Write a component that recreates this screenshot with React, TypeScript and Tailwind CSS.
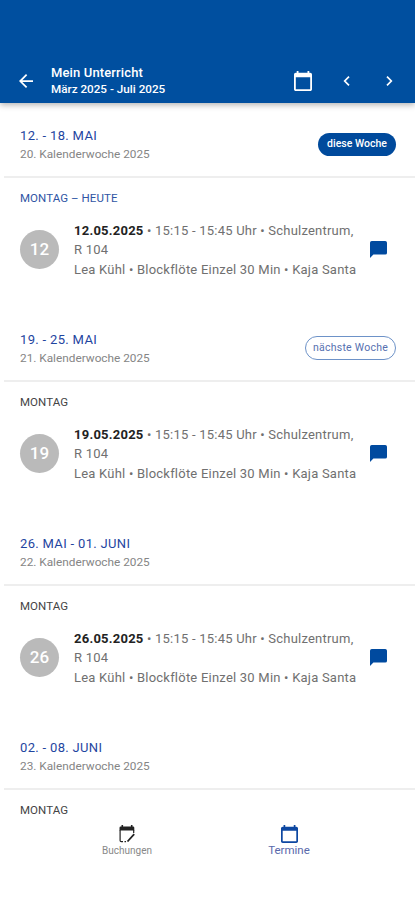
type Lesson = { day: string; date: string };

type Week = {
  title: string;
  week: number;
  label: string;
  today?: boolean;
  badge?: 'current' | 'next';
  lesson?: Lesson;
};

const weeks: Week[] = [
  { title: '12. - 18. MAI', week: 20, label: 'MONTAG – HEUTE', today: true, badge: 'current', lesson: { day: '12', date: '12.05.2025' } },
  { title: '19. - 25. MAI', week: 21, label: 'MONTAG', badge: 'next', lesson: { day: '19', date: '19.05.2025' } },
  { title: '26. MAI - 01. JUNI', week: 22, label: 'MONTAG', lesson: { day: '26', date: '26.05.2025' } },
  { title: '02. - 08. JUNI', week: 23, label: 'MONTAG' },
];

const CalendarIcon = ({ className }: { className: string }) => (
  <svg viewBox="2 1 20 22" fill="currentColor" preserveAspectRatio="none" className={className}>
    <path d="M20 3h-1V1h-2v2H7V1H5v2H4c-1.1 0-2 .9-2 2v16c0 1.1.9 2 2 2h16c1.1 0 2-.9 2-2V5c0-1.1-.9-2-2-2zm0 18H4V8h16v13z" />
  </svg>
);

const BookingIcon = () => (
  <svg viewBox="0 0 16 18" className="h-[18px] w-4 text-[#222]">
    <path d="M2.500 0h1.600v1.400h7.800V0h1.600v1.400h.5q1.300 0 1.300 1.300v2.800H.5V2.700q0-1.300 1.300-1.300h.7z" fill="currentColor" />
    <path d="M1.100 5v10.400q0 1.200 1.200 1.200H4M5.500 16.600H7M14.700 5v3" stroke="currentColor" strokeWidth="1.200" fill="none" />
    <path d="M8.500 16.500 15.200 9.200" stroke="currentColor" strokeWidth="1.800" fill="none" />
  </svg>
);

const Header = () => (
  <header className="relative z-10 flex h-[103px] shrink-0 items-end bg-[#004f9f] text-white shadow-[0_2px_6px_rgba(0,0,0,0.3)]">
    <div className="flex h-[45px] w-full items-center">
      <svg viewBox="4 4 16 16" fill="currentColor" className="ml-[19px] h-[14px] w-[14px]">
        <path d="M20 11H7.830l5.590-5.590L12 4l-8 8 8 8 1.410-1.410L7.830 13H20v-2z" />
      </svg>
      <div className="ml-[18px] flex-1 pt-px font-medium">
        <h1 className="text-[13px] leading-[17px] tracking-[0.01em]">Mein Unterricht</h1>
        <p className="text-[11.700px] leading-[17px]">März 2025 - Juli 2025</p>
      </div>
      <CalendarIcon className="h-5 w-[18px]" />
      <svg viewBox="0 0 7 10" className="ml-[31px] h-[10px] w-[7px]" fill="none" stroke="currentColor" strokeWidth="1.700">
        <path d="M6 .7 1.700 5 6 9.300" />
      </svg>
      <svg viewBox="0 0 7 10" className="mr-[22px] ml-9 h-[10px] w-[7px]" fill="none" stroke="currentColor" strokeWidth="1.700">
        <path d="M1 .7 5.300 5 1 9.300" />
      </svg>
    </div>
  </header>
);

const WeekBadge = ({ kind }: { kind: 'current' | 'next' }) =>
  kind === 'current' ? (
    <span className="flex h-[23px] w-[78px] items-center justify-center rounded-full bg-[#004a9c] text-[10.500px] font-medium whitespace-nowrap text-white">diese Woche</span>
  ) : (
    <span className="flex h-6 w-[91px] items-center justify-center rounded-full border border-[#6d92c8] text-[10.500px] tracking-[0.025em] whitespace-nowrap text-[#5670b0]">nächste Woche</span>
  );

const LessonRow = ({ day, date }: Lesson) => (
  <div className="flex items-center pt-[14px] pr-[28px] pl-5">
    <div className="flex h-[39px] w-[39px] shrink-0 items-center justify-center rounded-full bg-[#bababa] text-[17px] font-medium text-white">{day}</div>
    <div className="ml-[15px] flex-1 text-[13px] leading-[19.300px] tracking-[0.017em] whitespace-nowrap text-[#707070]">
      <p>
        <b className="font-bold tracking-[0.018em] text-[#222]">{date}</b> • 15:15 - 15:45 Uhr • Schulzentrum,
      </p>
      <p>R 104</p>
      <p>Lea Kühl • Blockflöte Einzel 30 Min • Kaja Santa</p>
    </div>
    <svg viewBox="0 0 17 17" className="h-[17px] w-[17px] shrink-0 text-[#004a9f]" fill="currentColor">
      <path d="M1.800 0h13.400Q17 0 17 1.700v10.200q0 1.700-1.800 1.700H3.400L0 17V1.700Q0 0 1.800 0z" />
    </svg>
  </div>
);

const WeekSection = ({ week }: { week: Week }) => (
  <section className="h-[204px] shrink-0">
    <div className="ml-1 flex h-[75px] items-center justify-between border-b-2 border-[#eeeeee] pr-[19px] pl-4">
      <div className="pt-[11px]">
        <h2 className="text-[13px] leading-[19px] tracking-[0.025em] text-[#1f459f]">{week.title}</h2>
        <p className="text-[11.800px] leading-[19px] text-[#858585]">{week.week}. Kalenderwoche 2025</p>
      </div>
      {week.badge && (
        <div className="pt-[9px]">
          <WeekBadge kind={week.badge} />
        </div>
      )}
    </div>
    <h3 className={`pt-3 pl-5 text-[11.500px] leading-[17px] tracking-[0.006em] ${week.today ? 'text-[#2f55a4]' : 'text-[#444]'}`}>{week.label}</h3>
    {week.lesson && <LessonRow {...week.lesson} />}
  </section>
);

const BottomNav = () => (
  <nav className="relative z-10 flex h-[81px] shrink-0 justify-center bg-white pt-1.5 pl-px">
    <div className="flex w-[162px] flex-col items-center text-[10px] leading-[14px] text-[#888]">
      <BookingIcon />
      <span className="mt-px">Buchungen</span>
    </div>
    <div className="flex w-[162px] flex-col items-center text-[11.500px] leading-[14px] text-[#5969ab]">
      <CalendarIcon className="h-[18px] w-[17px] text-[#0d47a1]" />
      <span>Termine</span>
    </div>
  </nav>
);

export default function App() {
  return (
    <div className="flex h-[900px] w-[415px] flex-col overflow-hidden bg-white font-['Roboto',sans-serif]">
      <Header />
      <main className="flex min-h-0 flex-1 flex-col overflow-hidden">
        {weeks.map((week) => (
          <WeekSection key={week.week} week={week} />
        ))}
      </main>
      <BottomNav />
    </div>
  );
}
